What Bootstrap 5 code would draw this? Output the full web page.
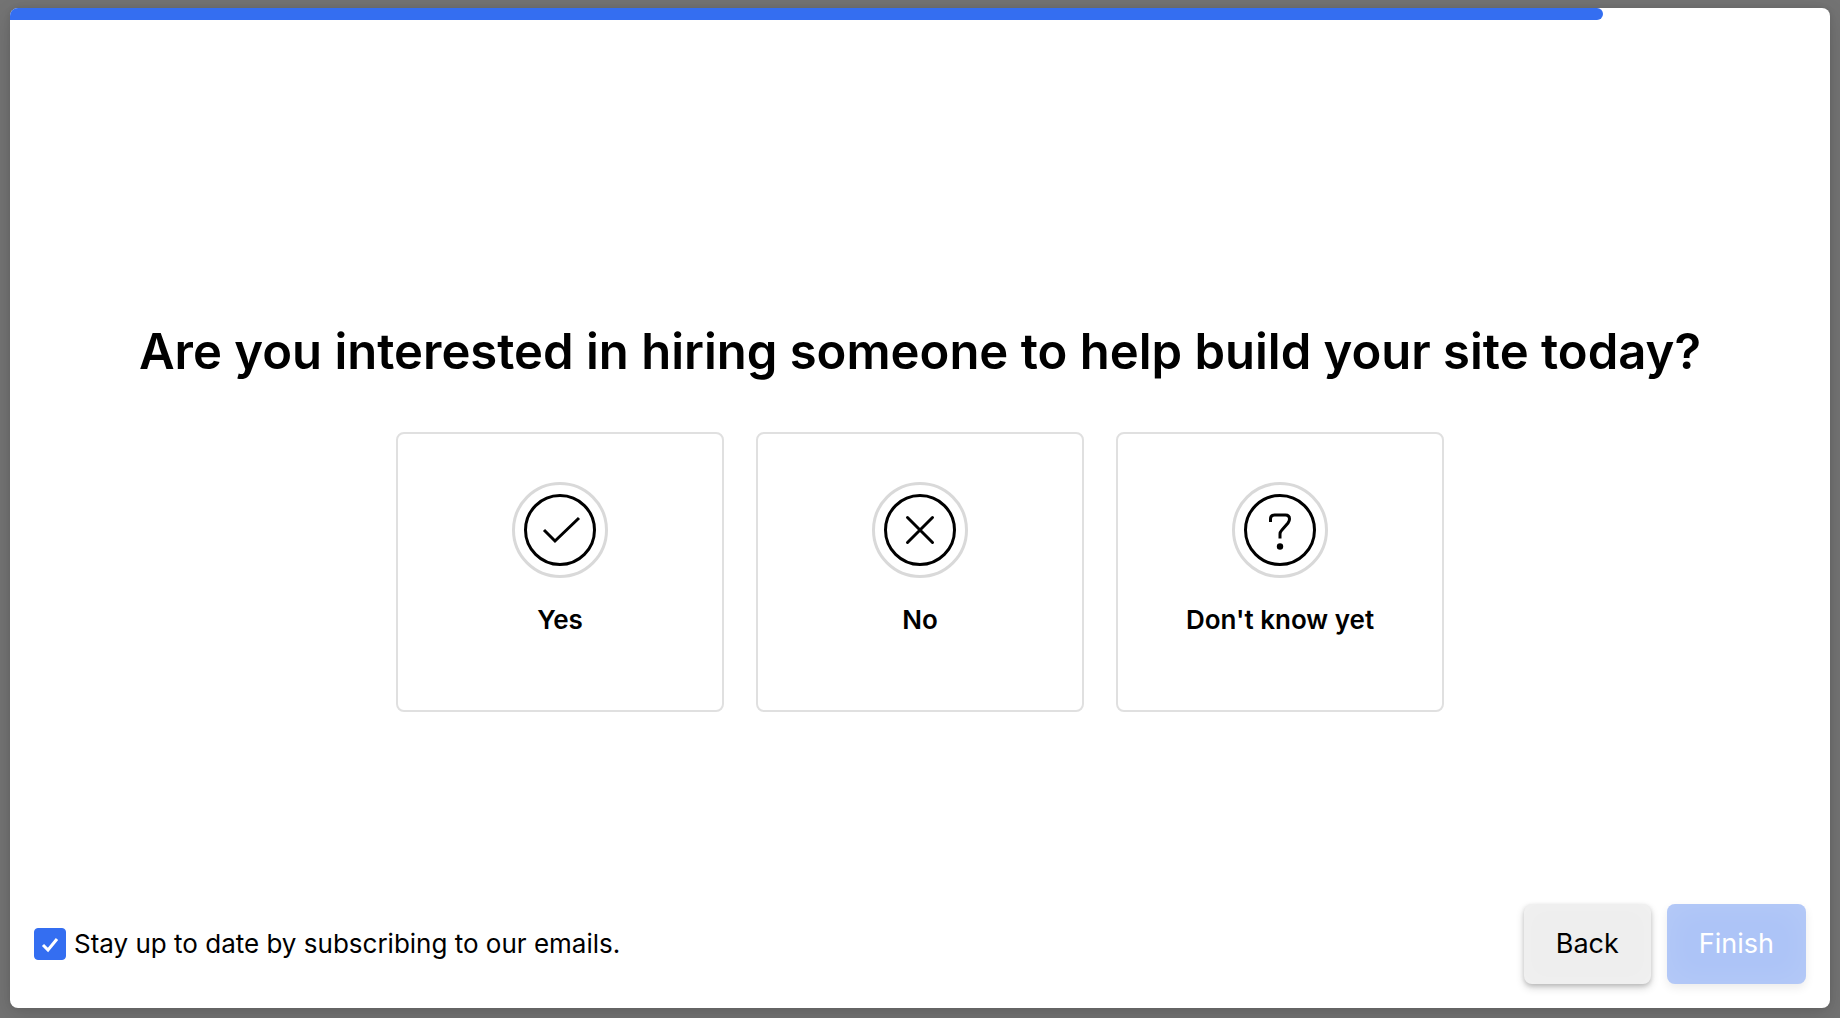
<!DOCTYPE html>
<html lang="en">
<head>
<meta charset="utf-8">
<meta name="viewport" content="width=device-width, initial-scale=1">
<title>Site setup</title>
<link href="https://cdn.jsdelivr.net/npm/bootstrap@5.3.0/dist/css/bootstrap.min.css" rel="stylesheet">
<style>
  body { background: #737373; font-family: Inter, "Liberation Sans", sans-serif; color: #000; }
  .wizard-page { padding: 8px 10px 10px; }
  .wizard {
    display: grid; grid-template-rows: minmax(0, 1fr) auto minmax(0, 1fr);
    background: #fff; border-radius: 8px; overflow: hidden;
    box-shadow: 0 8px 24px rgba(0, 0, 0, .12), 0 0 6px rgba(0, 0, 0, .1);
  }
  .wizard-progress { height: 12px; border-radius: 0; background: transparent; }
  .wizard-progress .progress-bar { background: #346ef1; border-radius: 0 6px 6px 0; }
  .wizard-title { font-size: 49px; line-height: 96px; font-weight: 600; margin-bottom: 32px; }
  .choices { gap: 32px; }
  .choice {
    width: 328px; height: 280px; padding-top: 48px; border: 2px solid #e0e0e0; border-radius: 8px;
    font-size: 26px; line-height: 32px; font-weight: 600; cursor: pointer;
  }
  .choice svg { width: 96px; height: 96px; margin-bottom: 26px; fill: none; stroke: #000; stroke-width: 3; }
  .btn-check:focus-visible + .choice { border-color: #346ef1; }
  .wizard-footer { padding: 24px; }
  .subscribe { font-size: 26px; line-height: 32px; gap: 8px; }
  .subscribe .form-check-input { width: 32px; height: 32px; border-radius: 4px; margin: 0; }
  .subscribe .form-check-input:checked {
    background-color: #346ef1; border-color: #346ef1; background-size: 32px 32px;
    background-image: url("data:image/svg+xml,%3csvg xmlns='http://www.w3.org/2000/svg' viewBox='0 0 32 32'%3e%3cpath fill='none' stroke='%23fff' stroke-width='3' d='M9 17l5 5L23 11'/%3e%3c/svg%3e");
  }
  .wizard-btn {
    height: 80px; padding: 0 32px; border: 0; border-radius: 8px; font-size: 27px; line-height: 40px;
    box-shadow: 0 4px 8px rgba(0, 0, 0, .16), 0 2px 4px rgba(0, 0, 0, .16), inset 0 0 24px rgba(255, 255, 255, .2);
  }
  .wizard-btn-back, .wizard-btn-back:hover { background: #eee; color: #000; }
  .wizard-btn-finish:disabled {
    background: #adc4f7; color: #fff; opacity: 1;
    box-shadow: 0 4px 10px rgba(0, 0, 0, .08), inset 0 0 32px rgba(255, 255, 255, .12);
  }
</style>
<script src="https://cdn.jsdelivr.net/npm/bootstrap@5.3.0/dist/js/bootstrap.bundle.min.js"></script>
</head>
<body>
<div class="wizard-page min-vh-100 d-flex">
  <form class="wizard w-100">
    <div>
      <div class="progress wizard-progress" role="progressbar" aria-label="Setup progress" aria-valuenow="87.5" aria-valuemin="0" aria-valuemax="100">
        <div class="progress-bar" style="width: 87.5%"></div>
      </div>
    </div>
    <main class="text-center">
      <h1 class="wizard-title">Are you interested in hiring someone to help build your site today?</h1>
      <div class="choices d-flex flex-wrap justify-content-center">
        <div>
          <input class="btn-check" type="radio" name="hire" id="hire-yes">
          <label class="choice d-flex flex-column align-items-center" for="hire-yes">
            <svg viewBox="0 0 96 96" aria-hidden="true"><circle cx="48" cy="48" r="46.5" stroke="#d9d9d9"/><circle cx="48" cy="48" r="34.5"/><path d="M32 48L43 59L67 36"/></svg>
            Yes
          </label>
        </div>
        <div>
          <input class="btn-check" type="radio" name="hire" id="hire-no">
          <label class="choice d-flex flex-column align-items-center" for="hire-no">
            <svg viewBox="0 0 96 96" aria-hidden="true"><circle cx="48" cy="48" r="46.5" stroke="#d9d9d9"/><circle cx="48" cy="48" r="34.5"/><path stroke-linecap="round" d="M35.5 35.5L60.5 60.5M60.5 35.5L35.5 60.5"/></svg>
            No
          </label>
        </div>
        <div>
          <input class="btn-check" type="radio" name="hire" id="hire-unsure">
          <label class="choice d-flex flex-column align-items-center" for="hire-unsure">
            <svg viewBox="0 0 96 96" aria-hidden="true"><circle cx="48" cy="48" r="46.5" stroke="#d9d9d9"/><circle cx="48" cy="48" r="34.5"/><path d="M38.5 40V37Q38.5 33 42.5 33H53.5Q57.5 33 57.5 37Q57.5 39 56 41L49.5 48.5Q48 50 48 52V56.5"/><circle cx="48" cy="64.5" r="3.2" fill="#000" stroke="none"/></svg>
            Don't know yet
          </label>
        </div>
      </div>
    </main>
    <footer class="wizard-footer d-flex align-items-end">
      <div class="d-flex w-100 align-items-center justify-content-between">
        <div class="subscribe d-flex align-items-center">
          <input class="form-check-input" type="checkbox" id="subscribe" checked>
          <label for="subscribe">Stay up to date by subscribing to our emails.</label>
        </div>
        <div class="d-flex gap-3">
          <button type="button" class="btn wizard-btn wizard-btn-back">Back</button>
          <button type="submit" class="btn wizard-btn wizard-btn-finish" disabled>Finish</button>
        </div>
      </div>
    </footer>
  </form>
</div>
</body>
</html>
